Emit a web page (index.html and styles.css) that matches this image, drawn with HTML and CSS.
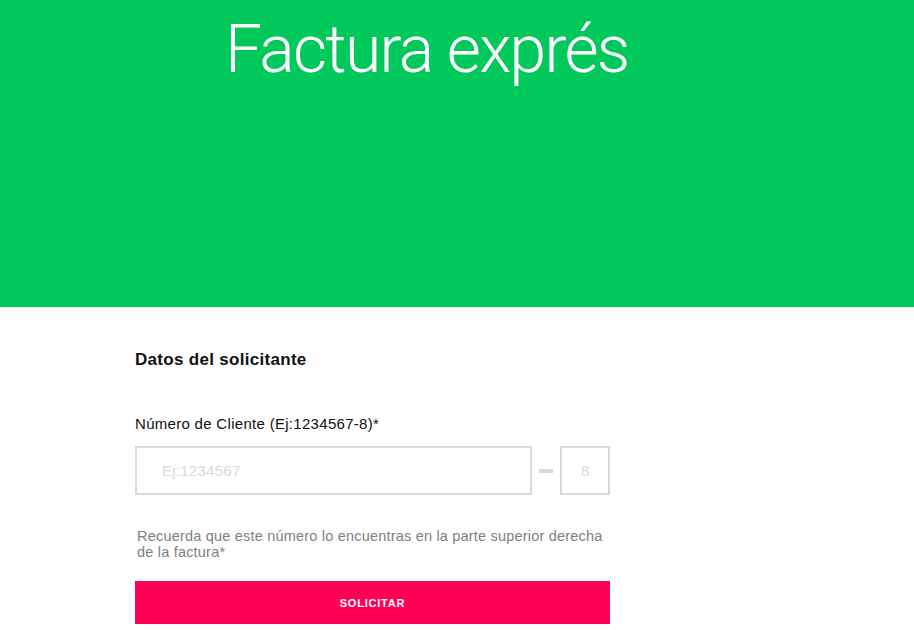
FILE: index.html
```html
<!DOCTYPE html>
<html lang="es">
<head>
<meta charset="utf-8">
<title>Factura exprés</title>
<link rel="stylesheet" href="styles.css">
</head>
<body>
<header class="hero">
  <h1 class="hero-title">Factura exprés</h1>
</header>
<main class="form">
  <h2 class="section-title">Datos del solicitante</h2>
  <label class="field-label" for="num">Número de Cliente (Ej:1234567-8)*</label>
  <div class="field-row">
    <input class="input input-main" id="num" type="text" placeholder="Ej:1234567">
    <span class="dash"></span>
    <input class="input input-dv" type="text" placeholder="8">
  </div>
  <p class="hint">Recuerda que este número lo encuentras en la parte superior derecha de la factura*</p>
  <button class="submit" type="button">SOLICITAR</button>
</main>
</body>
</html>
```
FILE: styles.css
```css
* { box-sizing: border-box; }
html, body { margin: 0; padding: 0; background: #fff; }
body { font-family: "Liberation Sans", Arial, sans-serif; overflow: hidden; }

.hero {
  background: #00c85b;
  height: 307px;
  padding-left: 225px;
}
.hero-title {
  margin: 0;
  padding-top: 10px;
  font-family: Roboto, "Liberation Sans", sans-serif;
  font-weight: 300;
  font-size: 66px;
  line-height: 80px;
  color: #fff;
  letter-spacing: -1.7px;
}

.form {
  width: 475px;
  margin-left: 135px;
  padding-top: 42px;
}
.section-title {
  margin: 0;
  font-size: 17px;
  font-weight: 700;
  color: #111;
  line-height: 22px;
  letter-spacing: 0.3px;
}
.field-label {
  display: block;
  margin-top: 44px;
  font-size: 15px;
  color: #111;
  line-height: 18px;
  letter-spacing: 0.3px;
}
.field-row {
  display: flex;
  align-items: center;
  margin-top: 13px;
}
.input {
  height: 49px;
  border: 2px solid #d9d9d9;
  background: #fff;
  font-family: "Liberation Sans", Arial, sans-serif;
  font-size: 15.5px;
  color: #333;
  outline: none;
}
.input::placeholder { color: #dadada; }
.input-main {
  width: 397px;
  padding: 0 0 0 25px;
}
.dash {
  width: 14px;
  height: 4px;
  background: #d9d9d9;
  margin: 0 7px 0 7px;
}
.input-dv {
  width: 50px;
  padding: 0;
  text-align: center;
}
.hint {
  margin: 33px 0 0 2px;
  font-size: 14.5px;
  line-height: 16px;
  color: #808080;
  width: 473px;
  letter-spacing: 0.2px;
}
.submit {
  display: block;
  width: 475px;
  height: 43px;
  margin-top: 21px;
  border: 0;
  background: #ff0055;
  color: #fff;
  font-family: "Liberation Sans", Arial, sans-serif;
  font-weight: 700;
  font-size: 11px;
  letter-spacing: 0.8px;
  cursor: pointer;
}
```
